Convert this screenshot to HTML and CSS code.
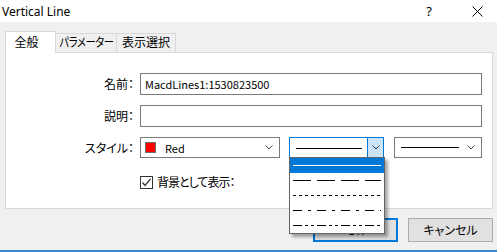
FILE: index.html
```html
<!doctype html>
<html lang="ja">
<head>
    <meta charset="utf-8"/>
    <title>Vertical Line</title>
    <link rel="stylesheet" href="styles.css">
</head>
<body>
<div class="window">
    <div class="titlebar">
        <span class="title">Vertical Line</span>
        <span class="help">?</span>
        <svg class="close" width="11" height="11" viewBox="0 0 11 11">
            <path d="M0.5 0.5 L10.5 10.5 M10.5 0.5 L0.5 10.5" stroke="#000" stroke-width="1"/>
        </svg>
    </div>

    <div class="content">
        <div class="tabs">
            <div class="tab active">全般</div>
            <div class="tab t2"><span class="narrow">パラメーター</span></div>
            <div class="tab t3">表示選択</div>
        </div>

        <div class="panel">
            <div class="form">
                <div class="label">名前：</div>
                <div class="input">MacdLines1:1530823500</div>

                <div class="label">説明：</div>
                <div class="input"></div>

                <div class="label">スタイル：</div>
                <div class="selects">
                    <div class="select color">
                        <span class="swatch"></span>
                        <span class="value">Red</span>
                        <svg class="chev" width="8" height="5" viewBox="0 0 8 5"><polyline points="0.5,0.5 4,4 7.5,0.5" fill="none" stroke="#444"/></svg>
                    </div>

                    <div class="select line open">
                        <svg class="stroke" width="66" height="3"><line x1="0" y1="1.5" x2="66" y2="1.5" stroke="#000"/></svg>
                        <div class="arrow">
                            <svg width="8" height="5" viewBox="0 0 8 5"><polyline points="0.5,0.5 4,4 7.5,0.5" fill="none" stroke="#333"/></svg>
                        </div>
                        <ul class="popup">
                            <li class="selected"><svg width="88" height="3"><line x1="0" y1="1.5" x2="88" y2="1.5" stroke="#fff"/></svg></li>
                            <li><svg width="88" height="3"><line x1="0" y1="1.5" x2="88" y2="1.5" stroke="#000" stroke-dasharray="18 6"/></svg></li>
                            <li><svg width="88" height="3"><line x1="0" y1="1.5" x2="88" y2="1.5" stroke="#000" stroke-dasharray="3 3"/></svg></li>
                            <li><svg width="88" height="3"><line x1="0" y1="1.5" x2="88" y2="1.5" stroke="#000" stroke-dasharray="9 6 3 6"/></svg></li>
                            <li><svg width="88" height="3"><line x1="0" y1="1.5" x2="88" y2="1.5" stroke="#000" stroke-dasharray="9 3 3 3 3 3"/></svg></li>
                        </ul>
                    </div>

                    <div class="select width">
                        <svg class="stroke" width="58" height="3"><line x1="0" y1="1.5" x2="58" y2="1.5" stroke="#000"/></svg>
                        <svg class="chev" width="8" height="5" viewBox="0 0 8 5"><polyline points="0.5,0.5 4,4 7.5,0.5" fill="none" stroke="#444"/></svg>
                    </div>
                </div>

                <div></div>
                <label class="check">
                    <svg width="13" height="13" viewBox="0 0 13 13">
                        <rect x="0.5" y="0.5" width="12" height="12" fill="#fff" stroke="#333"/>
                        <polyline points="2.5,6.5 5,9.5 10.5,3" fill="none" stroke="#333" stroke-width="1.2"/>
                    </svg>
                    <span>背景として表示：</span>
                </label>
            </div>
        </div>

        <div class="buttons">
            <button class="btn default">OK</button>
            <button class="btn">キャンセル</button>
        </div>
    </div>
</div>
</body>
</html>
```

FILE: styles.css
```css
body{
    margin: 0;
    background: #f0f0f0;
}

.window{
    width: 497px;
    height: 252px;
    box-sizing: border-box;
    background: #f0f0f0;
    border-bottom: 2px solid #3a8ad0;
    display: flex;
    flex-direction: column;
    font-family: "Noto Sans", "Noto Sans CJK JP", sans-serif;
    font-size: 12px;
    color: #000;
    font-feature-settings: "palt";
}

.titlebar{
    height: 22px;
    background: #fff;
    display: flex;
    align-items: center;
    padding-left: 2px;
}
.title{
    font-size: 12px;
}
.help{
    margin-left: auto;
    font-size: 13px;
}
.close{
    margin: 0 14px 0 40px;
}

.content{
    padding: 9px 0 0 5px;
}

.tabs{
    display: flex;
    align-items: flex-end;
    height: 21px;
}
.tab{
    height: 19px;
    box-sizing: border-box;
    border: 1px solid #d9d9d9;
    border-bottom: none;
    border-left: none;
    display: flex;
    align-items: center;
    justify-content: center;
    line-height: 1;
    white-space: nowrap;
}
.tab.active{
    width: 51px;
    height: 22px;
    margin-bottom: -1px;
    position: relative;
    z-index: 1;
    background: #fff;
    border-left: 1px solid #d9d9d9;
    padding-right: 8px;
    padding-top: 1px;
}
.tab.t2{
    width: 61px;
}
.narrow{
    display: inline-block;
    transform: scaleX(0.86);
    letter-spacing: -0.5px;
}
.tab.t3{
    width: 59px;
}

.panel{
    width: 488px;
    height: 157px;
    box-sizing: border-box;
    background: #fff;
    border: 1px solid #d9d9d9;
    padding-top: 20px;
}

.form{
    display: grid;
    grid-template-columns: 128px 342px;
    column-gap: 6px;
    row-gap: 10px;
    align-items: center;
}
.label{
    text-align: right;
}

.input{
    height: 22px;
    box-sizing: border-box;
    border: 1px solid #7a7a7a;
    padding-left: 4px;
    display: flex;
    align-items: center;
    font-family: "Noto Sans CJK JP", sans-serif;
    font-size: 11px;
}

.selects{
    display: flex;
    gap: 9px;
}
.select{
    height: 21px;
    box-sizing: border-box;
    border: 1px solid #7a7a7a;
    background: #fff;
    display: flex;
    align-items: center;
    position: relative;
}
.select.color{
    width: 140px;
    padding-left: 4px;
}
.swatch{
    width: 11px;
    height: 11px;
    box-sizing: border-box;
    background: #f00;
    border: 1px solid #6e6e6e;
}
.select .value{
    margin-left: 9px;
    font-family: "Noto Sans CJK JP", sans-serif;
    font-size: 11px;
}
.chev{
    margin-left: auto;
    margin-right: 6px;
}

.select.line{
    width: 96px;
    border-color: #0078d7;
    padding-left: 6px;
}
.select.line .stroke{
    margin-top: 1px;
}
.arrow{
    margin-left: auto;
    width: 16px;
    height: 19px;
    box-sizing: border-box;
    background: #cce4f7;
    border-left: 1px solid #0078d7;
    display: flex;
    align-items: center;
    justify-content: center;
}

.select.width{
    width: 88px;
    margin-left: 1px;
    padding-left: 6px;
}

.popup{
    position: absolute;
    left: -1px;
    top: 19px;
    width: 96px;
    margin: 0;
    padding: 0;
    list-style: none;
    background: #fff;
    box-sizing: border-box;
    border: 1px solid #646464;
    box-shadow: 3px 3px 3px rgba(0,0,0,0.35);
    z-index: 5;
}
.popup li{
    height: 15px;
    display: flex;
    align-items: center;
    padding-left: 3px;
}
.popup li.selected{
    background: #0078d7;
}

.check{
    display: flex;
    align-items: center;
    gap: 4px;
    margin-top: 5px;
    letter-spacing: -1px;
}

.buttons{
    display: flex;
    justify-content: flex-end;
    gap: 10px;
    margin-top: 9px;
    padding-right: 4px;
}
.btn{
    width: 85px;
    height: 24px;
    box-sizing: border-box;
    background: #e1e1e1;
    border: 1px solid #adadad;
    font-family: inherit;
    font-size: 12px;
    font-feature-settings: "palt";
    padding: 0;
}
.btn.default{
    border: 2px solid #0078d7;
}
```
